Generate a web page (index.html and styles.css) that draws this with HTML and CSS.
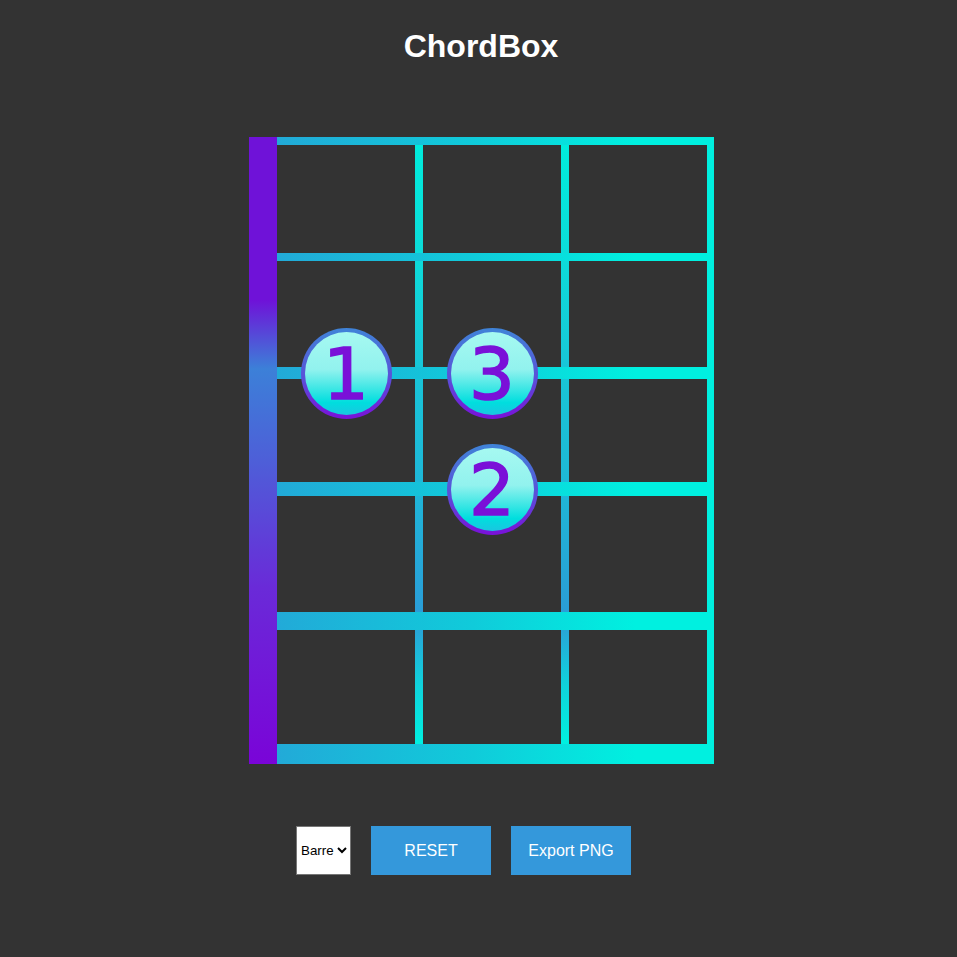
FILE: index.html
```html
<!DOCTYPE html>
<html lang="en">
<head>
<meta charset="utf-8">
<title>ChordBox</title>
<link rel="stylesheet" href="styles.css">
</head>
<body>
<div class="app">
  <h1 class="title">ChordBox</h1>
  <div class="board">
    <div class="nut"></div>
    <div class="string s2"></div>
    <div class="string s3"></div>
    <div class="fret f1"></div>
    <div class="fret f2"></div>
    <div class="fret f3"></div>
    <div class="fret f4"></div>
    <div class="fret f5"></div>
    <div class="fret f6"></div>
    <div class="edge"></div>
    <div class="dot d1"><span>1</span></div>
    <div class="dot d3"><span>3</span></div>
    <div class="dot d2"><span>2</span></div>
  </div>
  <div class="controls">
    <select class="mode">
      <option>Barre</option>
    </select>
    <button class="btn">RESET</button>
    <button class="btn">Export PNG</button>
  </div>
</div>
</body>
</html>
```
FILE: styles.css
```css
html, body {
  margin: 0;
  padding: 0;
  background: #333333;
}

.app {
  display: flex;
  flex-direction: column;
  align-items: center;
  padding-top: 28px;
  font-family: "Liberation Sans", Arial, sans-serif;
}

.title {
  margin: 0;
  padding-left: 5px;
  font-size: 32px;
  line-height: 37px;
  font-weight: bold;
  color: #ffffff;
}

.board {
  margin-top: 72px;
  margin-left: 6px;
  display: grid;
  grid-template-columns: 28px 138px 8px 138px 8px 138px 7px;
  grid-template-rows: 8px 108px 8px 106px 12px 103px 14px 116px 18px 114px 20px;
}

.nut {
  grid-column: 1;
  grid-row: 1 / 12;
  background: linear-gradient(to bottom,
    #6f12d8 0%, #6f12d8 26%, #3c80d8 37%, #4e5ed8 52%, #6a2ad8 72%, #7a04d8 100%);
}

.string {
  grid-row: 2 / 11;
  background: linear-gradient(to bottom,
    #00ecdc 0%, #0cdcd9 18%, #18c6d8 37%, #1eb8d8 56%, #2a9ed8 78%,
    #28a6d8 81%, #10d2dc 90%, #00f0e0 100%);
}
.s2 { grid-column: 3; }
.s3 { grid-column: 5; }

.fret {
  grid-column: 2 / 8;
  background: linear-gradient(to right, #22aad8 0%, #10cbda 45%, #00f0e0 82%);
}
.f1 { grid-row: 1; }
.f2 { grid-row: 3; }
.f3 { grid-row: 5; }
.f4 { grid-row: 7; }
.f5 { grid-row: 9; }
.f6 { grid-row: 11; }

.edge {
  grid-column: 7;
  grid-row: 1 / 12;
  background: #00f0e0;
}

.dot {
  z-index: 2;
  box-sizing: border-box;
  width: 91px;
  height: 91px;
  align-self: center;
  justify-self: center;
  border-radius: 50%;
  border: 4px solid transparent;
  background:
    linear-gradient(to bottom, #a6f9f1 0%, #92f2ee 45%, #00dede 85%, #1ac6e0 100%) padding-box,
    linear-gradient(to bottom, #3f84d8 0%, #5a50d8 55%, #7a10d8 100%) border-box;
  display: flex;
  align-items: center;
  justify-content: center;
  font-family: "DejaVu Sans", sans-serif;
  font-size: 72px;
  line-height: 1;
  color: #7a10d8;
  -webkit-text-stroke: 1.6px #7a10d8;
}
.dot span { padding-top: 2px; }
.d1 { grid-column: 2; grid-row: 5; }
.d3 { grid-column: 4; grid-row: 5; }
.d2 { grid-column: 4; grid-row: 7; }

.controls {
  margin-top: 62px;
  display: flex;
  align-items: center;
  gap: 20px;
  margin-right: 30px;
}

.mode {
  height: 49px;
  font-family: "Liberation Sans", Arial, sans-serif;
  font-size: 13.33px;
  background-color: #ffffff;
}

.btn {
  width: 120px;
  height: 49px;
  border: none;
  border-radius: 0;
  background: #3498db;
  color: #ffffff;
  font-family: "Liberation Sans", Arial, sans-serif;
  font-size: 16px;
  padding: 0;
}
```
